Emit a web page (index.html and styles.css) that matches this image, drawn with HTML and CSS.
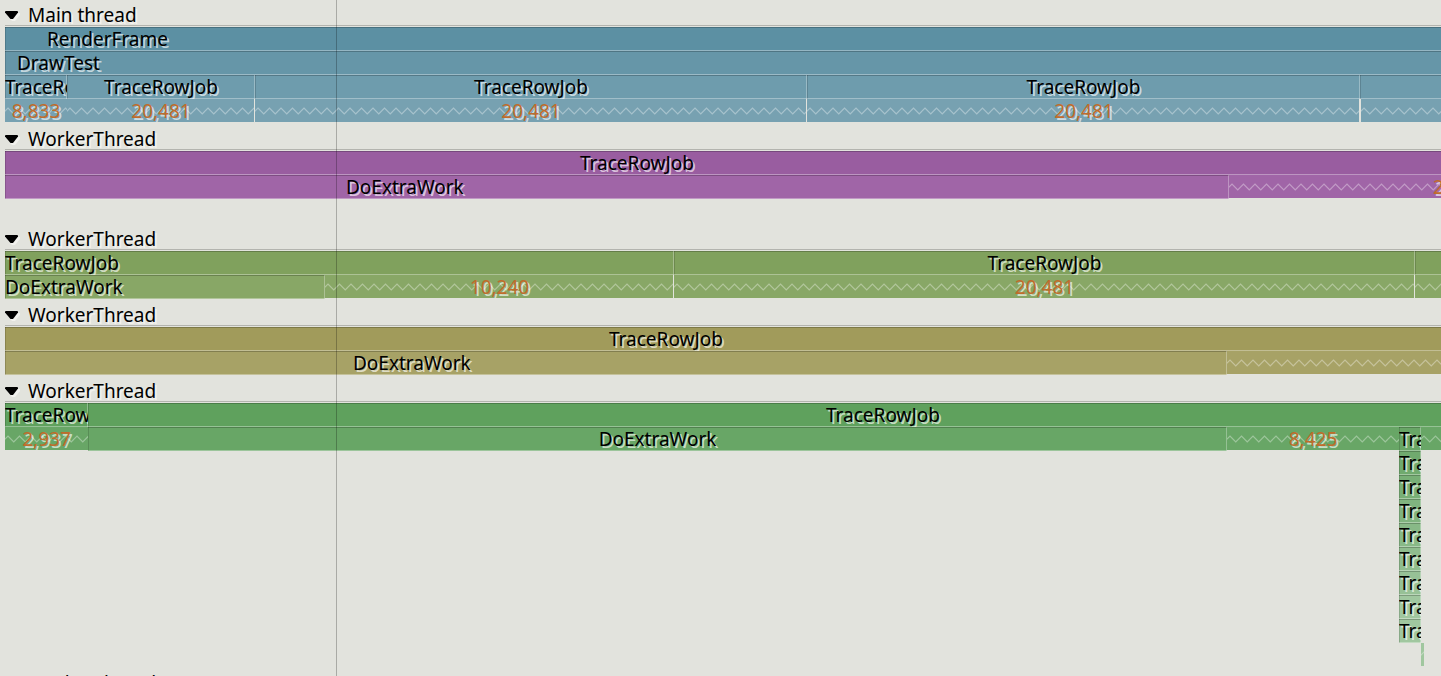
FILE: index.html
```html
<!DOCTYPE html>
<html lang="en">
<head>
<meta charset="utf-8">
<title>Trace timeline</title>
<link rel="stylesheet" href="styles.css">
</head>
<body>
<main class="timeline">
  <svg class="defs" aria-hidden="true"><defs>
    <symbol id="arrow" viewBox="0 -1 16 12"><path class="arrow-shadow" d="M2 3h13v2l-5 6H7L2 5z"/><path d="M0 1.500Q0 1 1 1h11q1 0 1 .5v1L8 9H5.500L0 2.500z"/></symbol>
  </defs></svg>

  <section class="thread blue">
    <button class="thread-title" aria-expanded="true"><svg class="arrow"><use href="#arrow"/></svg>Main thread</button>
    <div class="rows">
      <div class="row level-1"><div class="bar placed" style="--w:1436;--label:42px">RenderFrame</div></div>
      <div class="row level-2"><div class="bar placed" style="--w:1436;--label:12px">DrawTest</div></div>
      <div class="row level-3">
        <div class="bar placed" style="--w:62">TraceRowJob</div>
        <div class="bar" style="--w:188">TraceRowJob</div>
        <div class="bar" style="--w:552">TraceRowJob</div>
        <div class="bar" style="--w:553">TraceRowJob</div>
        <div class="bar" style="--w:81"></div>
      </div>
      <div class="row level-4">
        <div class="idle" style="--w:62">8,833</div>
        <div class="idle split" style="--w:188">20,481</div>
        <div class="idle split" style="--w:552">20,481</div>
        <div class="idle split wide" style="--w:554">20,481</div>
        <div class="idle" style="--w:80"></div>
      </div>
    </div>
  </section>

  <section class="thread purple">
    <button class="thread-title" aria-expanded="true"><svg class="arrow"><use href="#arrow"/></svg>WorkerThread</button>
    <div class="rows">
      <div class="row level-1"><div class="bar placed" style="--w:1436;--label:575px">TraceRowJob</div></div>
      <div class="row level-2">
        <div class="bar placed" style="--w:1224;--label:341px">DoExtraWork</div>
        <div class="idle placed" style="--w:212;--label:204px">20,481</div>
      </div>
      <div class="row"></div>
    </div>
  </section>

  <section class="thread green">
    <button class="thread-title" aria-expanded="true"><svg class="arrow"><use href="#arrow"/></svg>WorkerThread</button>
    <div class="rows">
      <div class="row level-1">
        <div class="bar placed" style="--w:669">TraceRowJob</div>
        <div class="bar" style="--w:741">TraceRowJob</div>
        <div class="bar" style="--w:26"></div>
      </div>
      <div class="row level-2">
        <div class="bar placed" style="--w:320">DoExtraWork</div>
        <div class="idle split" style="--w:349">10,240</div>
        <div class="idle split" style="--w:741">20,481</div>
        <div class="idle" style="--w:26"></div>
      </div>
    </div>
  </section>

  <section class="thread olive">
    <button class="thread-title" aria-expanded="true"><svg class="arrow"><use href="#arrow"/></svg>WorkerThread</button>
    <div class="rows">
      <div class="row level-1"><div class="bar placed" style="--w:1436;--label:604px">TraceRowJob</div></div>
      <div class="row level-2">
        <div class="bar placed" style="--w:1222;--label:348px">DoExtraWork</div>
        <div class="idle" style="--w:214"></div>
      </div>
    </div>
  </section>

  <section class="thread emerald">
    <button class="thread-title" aria-expanded="true"><svg class="arrow"><use href="#arrow"/></svg>WorkerThread</button>
    <div class="rows">
      <div class="row level-1">
        <div class="bar placed" style="--w:83">TraceRowJob</div>
        <div class="bar placed" style="--w:1353;--label:738px">TraceRowJob</div>
      </div>
      <div class="row level-2">
        <div class="idle" style="--w:83">2,937</div>
        <div class="bar" style="--w:1139">DoExtraWork</div>
        <div class="idle" style="--w:172">8,425</div>
        <div class="bar placed" style="--w:22">TraceRowJob</div>
        <div class="idle" style="--w:20"></div>
      </div>
      <div class="row level-3"><div class="gap" style="--w:1394"></div><div class="bar placed" style="--w:22">TraceRowJob</div><div class="gap" style="--w:20"></div></div>
      <div class="row level-4"><div class="gap" style="--w:1394"></div><div class="bar placed" style="--w:22">TraceRowJob</div><div class="gap" style="--w:20"></div></div>
      <div class="row level-5"><div class="gap" style="--w:1394"></div><div class="bar placed" style="--w:22">TraceRowJob</div><div class="gap" style="--w:20"></div></div>
      <div class="row level-6"><div class="gap" style="--w:1394"></div><div class="bar placed" style="--w:22">TraceRowJob</div><div class="gap" style="--w:20"></div></div>
      <div class="row level-7"><div class="gap" style="--w:1394"></div><div class="bar placed" style="--w:22">TraceRowJob</div><div class="gap" style="--w:20"></div></div>
      <div class="row level-8"><div class="gap" style="--w:1394"></div><div class="bar placed" style="--w:22">TraceRowJob</div><div class="gap" style="--w:20"></div></div>
      <div class="row level-9"><div class="gap" style="--w:1394"></div><div class="bar placed" style="--w:22">TraceRowJob</div><div class="gap" style="--w:20"></div></div>
      <div class="row level-9"><div class="gap" style="--w:1394"></div><div class="bar placed" style="--w:22">TraceRowJob</div><div class="gap" style="--w:20"></div></div>
      <div class="row level-9"><div class="gap" style="--w:1416"></div><div class="idle" style="--w:3"></div><div class="gap" style="--w:17"></div></div>
    </div>
  </section>

  <section class="thread">
    <button class="thread-title" aria-expanded="true"><svg class="arrow"><use href="#arrow"/></svg>WorkerThread</button>
  </section>

  <div class="cursor" style="left:336px"></div>
</main>
</body>
</html>
```
FILE: styles.css
```css
* { box-sizing: border-box; }

body {
  margin: 0;
  background: #e2e3dd;
  color: #000;
  font: 19px/24px "Noto Sans", "Open Sans", sans-serif;
}

.timeline {
  position: relative;
  height: 100vh;
  padding: 3px 0 0 5px;
  overflow: hidden;
}

.defs {
  position: absolute;
  width: 0;
  height: 0;
}

.thread { margin-bottom: 4px; }

.thread-title {
  display: flex;
  align-items: center;
  gap: 7px;
  width: 100%;
  height: 24px;
  padding: 0 0 1px;
  border: 0;
  background: linear-gradient(#b3b4ae, #b3b4ae) 0 22px / 100% 1px no-repeat;
  color: inherit;
  font: inherit;
  text-shadow: 2px 2px 0 #f2f2ee;
}

.arrow {
  width: 16px;
  height: 12px;
}

.arrow-shadow { fill: #f2f2ee; }

.row {
  display: flex;
  height: 24px;
}

.bar,
.idle,
.gap {
  flex: var(--w) 1 0;
  min-width: 0;
  overflow: hidden;
  white-space: nowrap;
}

.bar,
.idle {
  background-color: var(--fill);
  text-align: center;
  text-shadow: 2px 2px 0 rgba(255, 255, 255, 0.65);
}

.bar {
  --right-edge: -1px;
  box-shadow:
    inset var(--right-edge) 0 rgba(255, 255, 255, 0.3),
    inset 0 -1px rgba(255, 255, 255, 0.35),
    inset 0 1px rgba(0, 0, 0, 0.22),
    inset 1px 0 rgba(0, 0, 0, 0.15);
}

.bar:last-child { --right-edge: 0; }

.idle {
  height: 23px;
  background-image: url("data:image/svg+xml,%3Csvg xmlns='http://www.w3.org/2000/svg' width='23' height='23'%3E%3Cpath d='M-3 15L0 12L3 9L8.750 15L14.500 9L20.250 15L26 9' fill='none' stroke='white' stroke-opacity='.35' stroke-width='1.200'/%3E%3C/svg%3E");
  background-repeat: repeat-x;
  color: #c06c2c;
}

.split { box-shadow: inset -1px 0 #e2e3dd; }
.split.wide { box-shadow: inset -2px 0 #e2e3dd; }

.placed {
  text-align: left;
  text-indent: var(--label, 0);
}

.blue .level-1 { --fill: #5c90a3; }
.blue .level-2 { --fill: #6696a8; }
.blue .level-3 { --fill: #6e9cad; }
.blue .level-4 { --fill: #77a1b1; }

.purple .level-1 { --fill: #995da0; }
.purple .level-2 { --fill: #a065a7; }

.green .level-1 { --fill: #80a15d; }
.green .level-2 { --fill: #88a766; }

.olive .level-1 { --fill: #a19b5b; }
.olive .level-2 { --fill: #a7a266; }

.emerald .level-1 { --fill: #5fa15d; }
.emerald .level-2 { --fill: #68a666; }
.emerald .level-3 { --fill: #70aa6e; }
.emerald .level-4 { --fill: #78af76; }
.emerald .level-5 { --fill: #80b47f; }
.emerald .level-6 { --fill: #88b987; }
.emerald .level-7 { --fill: #8fbd8e; }
.emerald .level-8 { --fill: #97c196; }
.emerald .level-9 { --fill: #a0c79f; }

.cursor {
  position: absolute;
  top: 0;
  bottom: 0;
  width: 1px;
  background: rgba(0, 0, 0, 0.25);
}
```
